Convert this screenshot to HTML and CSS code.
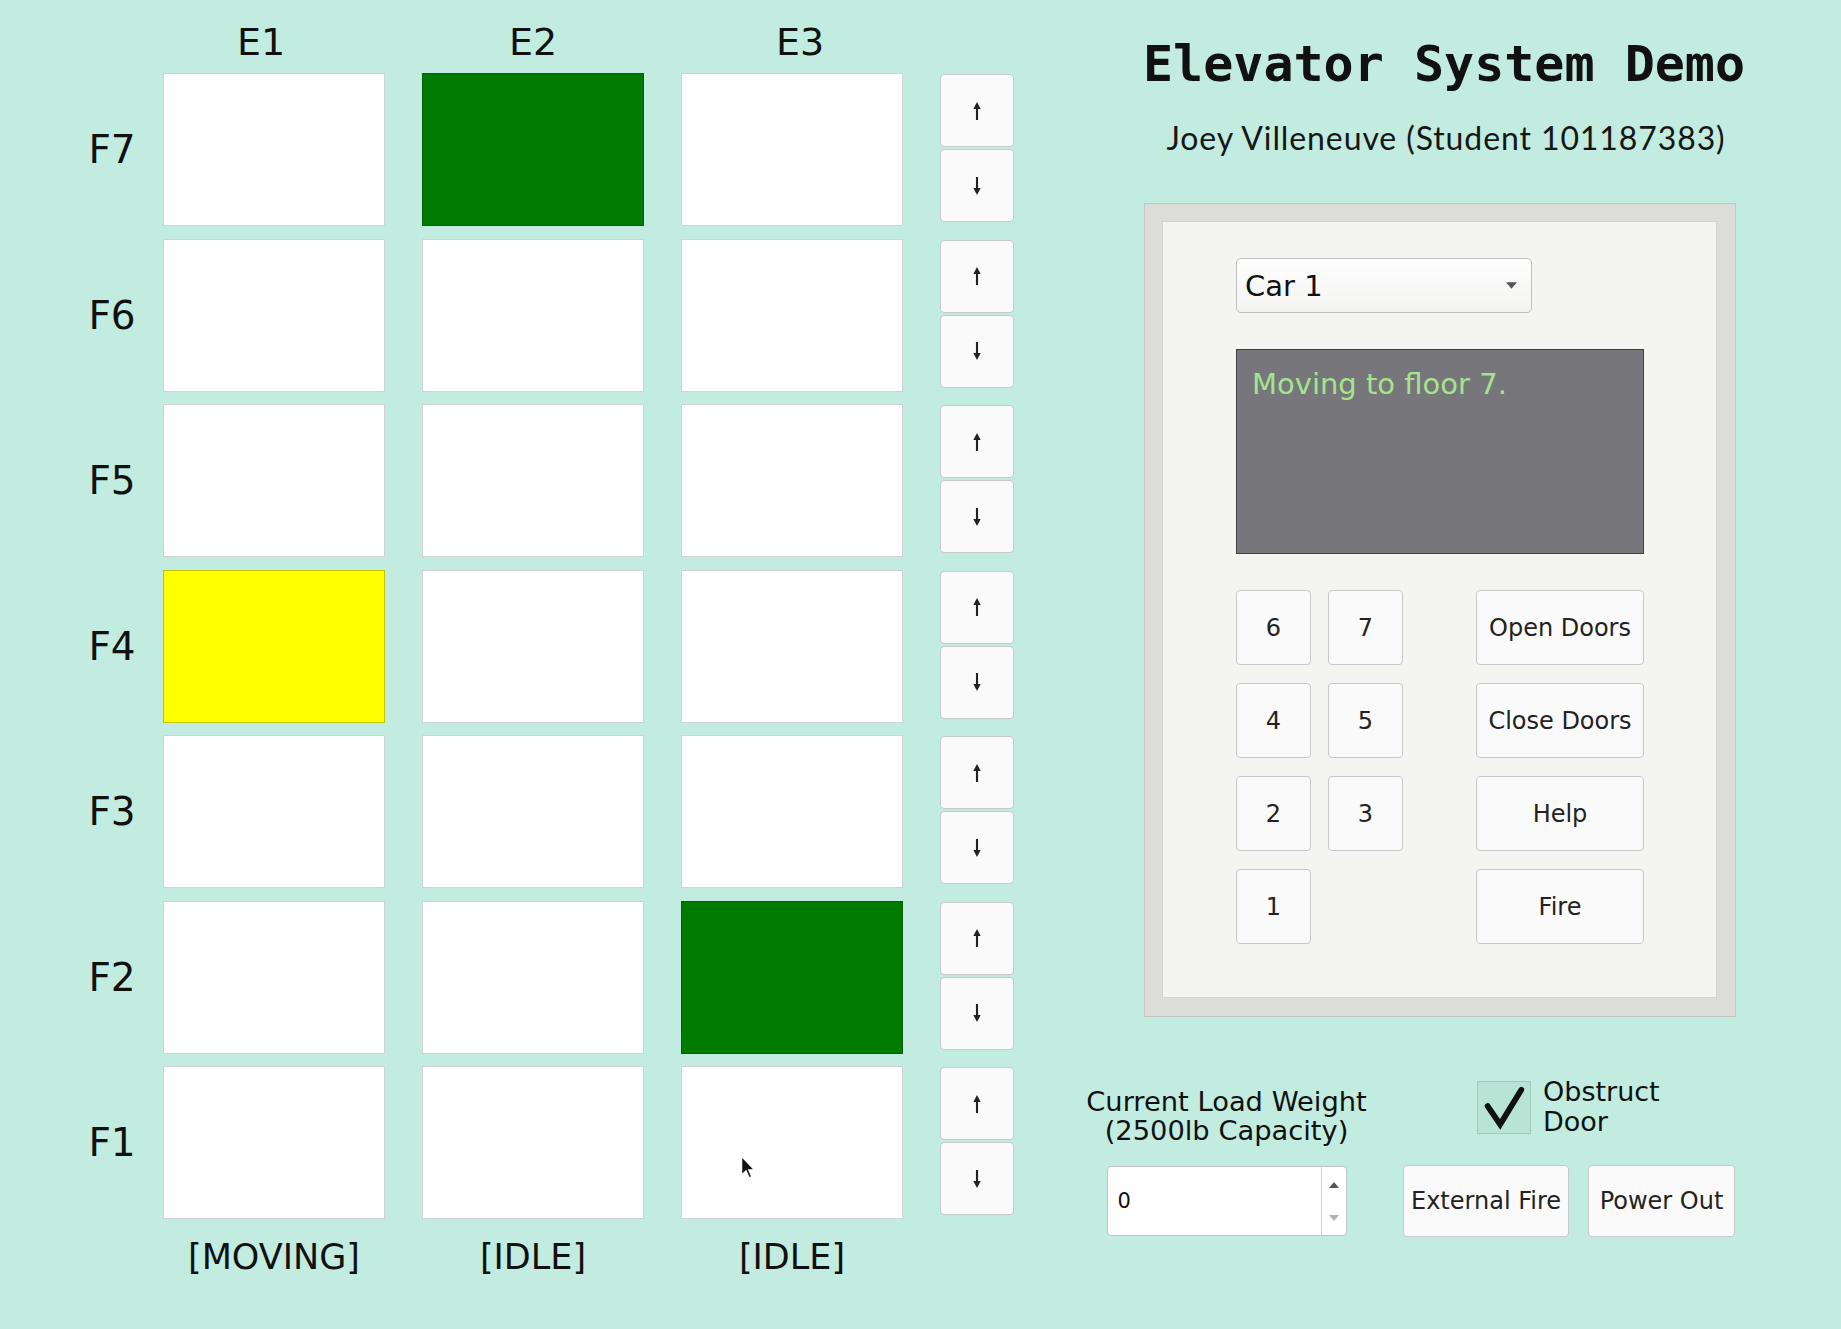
FILE: index.html
```html
<!DOCTYPE html>
<html lang="en">
<head>
<meta charset="utf-8">
<title>Elevator System Demo</title>
<link rel="stylesheet" href="styles.css">
</head>
<body>
<div class="app">
  <section class="shaft">
    <div class="head"><span class="h1c">E1</span><span>E2</span><span class="h3c">E3</span></div>
    <div class="floors">
      <div class="floor">
        <div class="flabel">F7</div>
        <div class="cells"><div class="cell"></div><div class="cell stop"></div><div class="cell"></div></div>
        <div class="calls">
          <button class="call"><svg class="arr" viewBox="0 0 10 20"><path d="M5 1 L1.3 8 H8.7 Z"/><line x1="5" y1="6" x2="5" y2="19"/></svg></button>
          <button class="call"><svg class="arr" viewBox="0 0 10 20"><path d="M5 19 L1.3 12 H8.7 Z"/><line x1="5" y1="1" x2="5" y2="14"/></svg></button>
        </div>
      </div>
      <div class="floor">
        <div class="flabel">F6</div>
        <div class="cells"><div class="cell"></div><div class="cell"></div><div class="cell"></div></div>
        <div class="calls">
          <button class="call"><svg class="arr" viewBox="0 0 10 20"><path d="M5 1 L1.3 8 H8.7 Z"/><line x1="5" y1="6" x2="5" y2="19"/></svg></button>
          <button class="call"><svg class="arr" viewBox="0 0 10 20"><path d="M5 19 L1.3 12 H8.7 Z"/><line x1="5" y1="1" x2="5" y2="14"/></svg></button>
        </div>
      </div>
      <div class="floor">
        <div class="flabel">F5</div>
        <div class="cells"><div class="cell"></div><div class="cell"></div><div class="cell"></div></div>
        <div class="calls">
          <button class="call"><svg class="arr" viewBox="0 0 10 20"><path d="M5 1 L1.3 8 H8.7 Z"/><line x1="5" y1="6" x2="5" y2="19"/></svg></button>
          <button class="call"><svg class="arr" viewBox="0 0 10 20"><path d="M5 19 L1.3 12 H8.7 Z"/><line x1="5" y1="1" x2="5" y2="14"/></svg></button>
        </div>
      </div>
      <div class="floor">
        <div class="flabel">F4</div>
        <div class="cells"><div class="cell moving"></div><div class="cell"></div><div class="cell"></div></div>
        <div class="calls">
          <button class="call"><svg class="arr" viewBox="0 0 10 20"><path d="M5 1 L1.3 8 H8.7 Z"/><line x1="5" y1="6" x2="5" y2="19"/></svg></button>
          <button class="call"><svg class="arr" viewBox="0 0 10 20"><path d="M5 19 L1.3 12 H8.7 Z"/><line x1="5" y1="1" x2="5" y2="14"/></svg></button>
        </div>
      </div>
      <div class="floor">
        <div class="flabel">F3</div>
        <div class="cells"><div class="cell"></div><div class="cell"></div><div class="cell"></div></div>
        <div class="calls">
          <button class="call"><svg class="arr" viewBox="0 0 10 20"><path d="M5 1 L1.3 8 H8.7 Z"/><line x1="5" y1="6" x2="5" y2="19"/></svg></button>
          <button class="call"><svg class="arr" viewBox="0 0 10 20"><path d="M5 19 L1.3 12 H8.7 Z"/><line x1="5" y1="1" x2="5" y2="14"/></svg></button>
        </div>
      </div>
      <div class="floor">
        <div class="flabel">F2</div>
        <div class="cells"><div class="cell"></div><div class="cell"></div><div class="cell stop"></div></div>
        <div class="calls">
          <button class="call"><svg class="arr" viewBox="0 0 10 20"><path d="M5 1 L1.3 8 H8.7 Z"/><line x1="5" y1="6" x2="5" y2="19"/></svg></button>
          <button class="call"><svg class="arr" viewBox="0 0 10 20"><path d="M5 19 L1.3 12 H8.7 Z"/><line x1="5" y1="1" x2="5" y2="14"/></svg></button>
        </div>
      </div>
      <div class="floor">
        <div class="flabel">F1</div>
        <div class="cells"><div class="cell"></div><div class="cell"></div><div class="cell"></div></div>
        <div class="calls">
          <button class="call"><svg class="arr" viewBox="0 0 10 20"><path d="M5 1 L1.3 8 H8.7 Z"/><line x1="5" y1="6" x2="5" y2="19"/></svg></button>
          <button class="call"><svg class="arr" viewBox="0 0 10 20"><path d="M5 19 L1.3 12 H8.7 Z"/><line x1="5" y1="1" x2="5" y2="14"/></svg></button>
        </div>
      </div>
    </div>
    <div class="status"><span>[MOVING]</span><span>[IDLE]</span><span>[IDLE]</span></div>
  </section>

  <section class="control">
    <h1 class="title">Elevator System Demo</h1>
    <p class="author">Joey Villeneuve (Student 101187383)</p>
    <div class="frame">
      <div class="panel">
        <div class="select"><span>Car 1</span><svg class="caret" viewBox="0 0 10 6"><path d="M0 0 H10 L5 6 Z"/></svg></div>
        <div class="display">Moving to floor 7.</div>
        <div class="keypad">
          <button class="key">6</button><button class="key">7</button><button class="key wide">Open Doors</button>
          <button class="key">4</button><button class="key">5</button><button class="key wide">Close Doors</button>
          <button class="key">2</button><button class="key">3</button><button class="key wide">Help</button>
          <button class="key">1</button><button class="key wide">Fire</button>
        </div>
      </div>
    </div>
    <div class="extras">
      <div class="load">
        <div class="load-label">Current Load Weight<br>(2500lb Capacity)</div>
        <div class="spin">
          <span class="spin-value">0</span>
          <span class="spin-btns">
            <svg class="spin-up" viewBox="0 0 10 6"><path d="M0 6 H10 L5 0 Z"/></svg>
            <svg class="spin-down" viewBox="0 0 10 6"><path d="M0 0 H10 L5 6 Z"/></svg>
          </span>
        </div>
      </div>
      <div class="faults">
        <div class="obstruct">
          <span class="check"><svg viewBox="0 0 54 53"><path d="M10 25 L23 44 L45 8"/></svg></span>
          <span class="obstruct-label">Obstruct<br>Door</span>
        </div>
        <div class="fault-btns">
          <button class="fbtn ext">External Fire</button>
          <button class="fbtn power">Power Out</button>
        </div>
      </div>
    </div>
  </section>
</div>
<svg class="cursor" viewBox="0 0 12 20"><path d="M0.5 0.5 V16.5 L4.3 12.8 L7 19 L9.2 18 L6.6 12 H11.5 Z"/></svg>
</body>
</html>
```

FILE: styles.css
```css
* { box-sizing: border-box; }
html, body { margin: 0; padding: 0; }
body {
  width: 1841px;
  height: 1329px;
  overflow: hidden;
  position: relative;
  background: #c1ecdf;
  font-family: "DejaVu Sans", "Liberation Sans", sans-serif;
  color: #111;
}
button {
  font-family: "DejaVu Sans", "Liberation Sans", sans-serif;
  color: #222;
  padding: 0;
  margin: 0;
  cursor: default;
}

.app { display: flex; align-items: flex-start; }

/* ---------- shaft grid ---------- */
.shaft { width: 1014px; flex: none; }
.head {
  display: flex;
  gap: 37px;
  padding-left: 163px;
  padding-top: 20px;
  height: 73px;
}
.head span {
  width: 222px;
  text-align: center;
  font-size: 38px;
  line-height: 44px;
}
.head .h1c { padding-right: 26px; }
.head .h3c { padding-left: 16px; }
.floors { display: flex; flex-direction: column; gap: 12.5px; }
.floor { display: flex; height: 153px; }
.flabel {
  width: 102px;
  margin-left: 61px;
  text-align: center;
  font-size: 39px;
  line-height: 153px;
}
.cells { display: flex; gap: 37px; }
.cell {
  width: 222px;
  height: 153px;
  background: #fff;
  border: 1px solid #d2d4d3;
}
.cell.stop { background: #007b00; border-color: #075f07; }
.cell.moving { background: #ffff00; border-color: #c4c400; }
.calls {
  margin-left: 37px;
  display: flex;
  flex-direction: column;
  gap: 2px;
  padding-top: 1px;
}
.call {
  width: 74px;
  height: 73px;
  background: #fafafa;
  border: 1px solid #c6cac8;
  border-radius: 4px;
  display: flex;
  align-items: center;
  justify-content: center;
}
.arr { width: 10px; height: 20px; }
.arr path { fill: #222; }
.arr line { stroke: #222; stroke-width: 2.1; }

.status {
  display: flex;
  gap: 37px;
  padding-left: 163px;
}
.status span {
  width: 222px;
  text-align: center;
  font-size: 35px;
  line-height: 76px;
}

/* ---------- control side ---------- */
.control { width: 593px; margin-left: 129px; flex: none; }
.title {
  margin: 35px 0 0;
  padding-right: 6px;
  font-family: "DejaVu Sans Mono", "Liberation Mono", monospace;
  font-weight: bold;
  font-size: 50px;
  line-height: 58px;
  text-align: center;
  white-space: nowrap;
}
.author {
  margin: 25px 0 0;
  padding-left: 13px;
  font-family: Lato, "Open Sans", sans-serif;
  font-size: 32px;
  letter-spacing: 0.9px;
  line-height: 40px;
  text-align: center;
  white-space: nowrap;
  color: #161616;
}
.frame {
  margin: 45px 0 0 1px;
  width: 592px;
  height: 814px;
  background: #dcdcda;
  border: 1px solid #c5c5c3;
  padding: 17px 18px 18px 17px;
}
.panel {
  height: 100%;
  background: #f4f4f1;
  border: 1px solid #d4d4d2;
  padding: 36px 0 0 73px;
  display: flex;
  flex-direction: column;
  align-items: flex-start;
  gap: 36px;
}
.select {
  width: 296px;
  height: 55px;
  border: 1px solid #bfbfbf;
  border-radius: 5px;
  background: linear-gradient(#fefefe, #f3f3f2);
  display: flex;
  align-items: center;
  justify-content: space-between;
  padding: 0 14px 0 8px;
  font-size: 29px;
  color: #111;
}
.caret { width: 11px; height: 7px; }
.caret path { fill: #555; }
.display {
  width: 408px;
  height: 205px;
  background: #77767b;
  border: 1px solid #3f3f42;
  color: #a4e48c;
  font-size: 29px;
  line-height: 40px;
  padding: 14px 0 0 15px;
}
.keypad {
  display: grid;
  grid-template-columns: 75px 75px 39px 168px;
  grid-auto-rows: 75px;
  column-gap: 17px;
  row-gap: 18px;
}
.key {
  background: #fafafa;
  border: 1px solid #c8c8c8;
  border-radius: 4px;
  font-size: 24px;
}
.key.wide { grid-column: 4; }

/* ---------- bottom controls ---------- */
.extras {
  margin: 60px 0 0 -58px;
  display: flex;
  gap: 35px;
  align-items: flex-start;
}
.load {
  width: 283px;
  padding-top: 10px;
  display: flex;
  flex-direction: column;
  align-items: center;
}
.load-label {
  font-size: 27.3px;
  line-height: 29px;
  text-align: center;
  white-space: nowrap;
}
.spin {
  margin-top: 21px;
  width: 240px;
  height: 70px;
  background: #fff;
  border: 1px solid #c2c4c3;
  border-radius: 4px;
  display: flex;
}
.spin-value {
  flex: 1;
  font-size: 21px;
  line-height: 68px;
  padding-left: 10px;
  color: #111;
}
.spin-btns {
  width: 25px;
  border-left: 1px solid #cfd1d0;
  display: flex;
  flex-direction: column;
  align-items: center;
  justify-content: space-between;
  padding: 15px 0 14px;
}
.spin-btns svg { width: 10px; height: 6px; }
.spin-up path { fill: #555; }
.spin-down path { fill: #b0b0b0; }

.faults { width: 333px; }
.obstruct {
  display: flex;
  align-items: flex-start;
  gap: 12px;
  padding-left: 74px;
}
.check {
  width: 54px;
  height: 53px;
  margin-top: 4px;
  border: 1px solid #9fc9bb;
  background: #b8e4d6;
  display: block;
}
.check svg { width: 100%; height: 100%; display: block; }
.check path {
  fill: none;
  stroke: #111;
  stroke-width: 6;
  stroke-linecap: round;
  stroke-linejoin: miter;
}
.obstruct-label {
  font-size: 27px;
  line-height: 30px;
  color: #111;
}
.fault-btns { display: flex; gap: 19px; margin-top: 28px; }
.fbtn {
  height: 72px;
  background: #fafafa;
  border: 1px solid #c6cac8;
  border-radius: 4px;
  font-size: 24px;
  white-space: nowrap;
}
.fbtn.ext { width: 166px; }
.fbtn.power { width: 147px; }

.cursor {
  position: absolute;
  left: 741px;
  top: 1156px;
  width: 14px;
  height: 23px;
}
.cursor path { fill: #111; stroke: #fff; stroke-width: 1; }
```
